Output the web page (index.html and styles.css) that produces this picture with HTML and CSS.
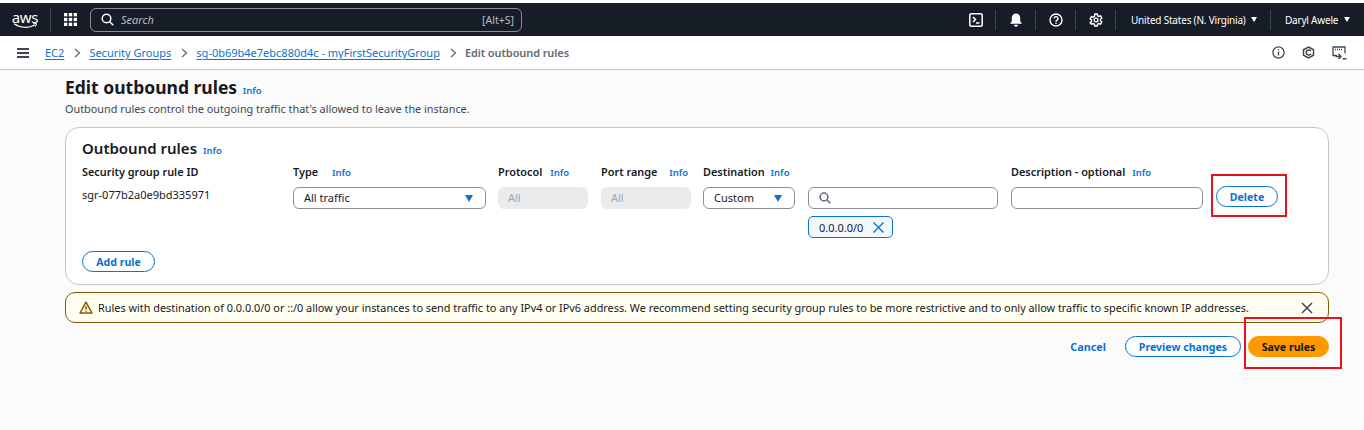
FILE: index.html
```html
<!DOCTYPE html>
<html>
<head>
	<meta charset="UTF-8">
	<title>Edit outbound rules</title>
	<link rel="stylesheet" href="styles.css">
</head>
<body>
	<header class="topbar">
		<div class="logo">
			<span class="logo-text">aws</span>
			<svg class="logo-smile" width="25" height="6" viewBox="0 0 25 6"><path d="M1 .8c6 4.300 15 4.500 21 1.200" fill="none" stroke="#fff" stroke-width="1.200"/><path d="M20 .8l3.500-.3-1 3.200" fill="none" stroke="#fff" stroke-width="1"/></svg>
		</div>
		<div class="top-sep"></div>
		<svg class="grid-icon" width="13" height="13" viewBox="0 0 14 14" fill="#fff">
			<rect x="0" y="0" width="3.600" height="3.600"/><rect x="5.200" y="0" width="3.600" height="3.600"/><rect x="10.400" y="0" width="3.600" height="3.600"/>
			<rect x="0" y="5.200" width="3.600" height="3.600"/><rect x="5.200" y="5.200" width="3.600" height="3.600"/><rect x="10.400" y="5.200" width="3.600" height="3.600"/>
			<rect x="0" y="10.400" width="3.600" height="3.600"/><rect x="5.200" y="10.400" width="3.600" height="3.600"/><rect x="10.400" y="10.400" width="3.600" height="3.600"/>
		</svg>
		<div class="searchbar">
			<svg width="13" height="13" viewBox="0 0 13 13" fill="none" stroke="#fff" stroke-width="1.500"><circle cx="5.500" cy="5.500" r="4.300"/><path d="M8.700 8.700l3.600 3.600"/></svg>
			<span class="search-text">Search</span>
			<span class="search-key">[Alt+S]</span>
		</div>
		<div class="top-right">
			<div class="top-btn">
				<svg width="14" height="14" viewBox="0 0 14 14" fill="none" stroke="#fff" stroke-width="1.500"><rect x=".8" y=".8" width="12.400" height="12.400" rx="1.500"/><path d="M4 4l2.500 2.500L4 9M7 10h3.500"/></svg>
			</div>
			<div class="top-btn">
				<svg width="14" height="14" viewBox="0 0 14 14" fill="#fff"><path d="M7 .5a4.200 4.200 0 0 0-4.200 4.200v3.500L1 10.700h12l-1.800-2.500V4.700A4.200 4.200 0 0 0 7 .5z"/><path d="M5 11.700h4a2 2 0 0 1-4 0z"/></svg>
			</div>
			<div class="top-btn">
				<svg width="14" height="14" viewBox="0 0 14 14" fill="none" stroke="#fff" stroke-width="1.400"><circle cx="7" cy="7" r="6"/><path d="M5.200 5.500a1.900 1.900 0 1 1 2.800 1.700c-.7.400-1 .7-1 1.500"/><path d="M7 9.700v1.300"/></svg>
			</div>
			<div class="top-btn">
				<svg width="14" height="14" viewBox="0 0 14 14" fill="none" stroke="#fff" stroke-width="1.400"><path d="M5.800 1h2.400l.4 1.700 1.300.7 1.700-.5 1.200 2.100-1.300 1.200v1.600l1.300 1.200-1.200 2.100-1.700-.5-1.300.7-.4 1.700H5.800l-.4-1.700-1.300-.7-1.700.5L1.200 9.800l1.300-1.200V7L1.200 5.800l1.200-2.100 1.700.5 1.300-.7z"/><circle cx="7" cy="7" r="1.900"/></svg>
			</div>
			<div class="top-menu region">United States (N. Virginia)<span class="caret"></span></div>
			<div class="top-menu user">Daryl Awele<span class="caret"></span></div>
		</div>
	</header>

	<nav class="crumbs">
		<svg class="menu-icon" width="12" height="10" viewBox="0 0 12 10" fill="#414750"><rect width="12" height="2"/><rect y="4" width="12" height="2"/><rect y="8" width="12" height="2"/></svg>
		<a class="crumb">EC2</a>
		<svg class="chev" width="7" height="10" viewBox="0 0 7 10"><path d="M1 1l4.500 4L1 9" fill="none" stroke="#5f6b7a" stroke-width="1.300"/></svg>
		<a class="crumb">Security Groups</a>
		<svg class="chev" width="7" height="10" viewBox="0 0 7 10"><path d="M1 1l4.500 4L1 9" fill="none" stroke="#5f6b7a" stroke-width="1.300"/></svg>
		<a class="crumb">sg-0b69b4e7ebc880d4c - myFirstSecurityGroup</a>
		<svg class="chev" width="7" height="10" viewBox="0 0 7 10"><path d="M1 1l4.500 4L1 9" fill="none" stroke="#5f6b7a" stroke-width="1.300"/></svg>
		<span class="crumb-now">Edit outbound rules</span>
		<div class="crumb-tools">
			<svg width="13" height="13" viewBox="0 0 13 13" fill="none" stroke="#414750" stroke-width="1.300"><circle cx="6.500" cy="6.500" r="5.600"/><path d="M6.500 5.500v4M6.500 3v1.300"/></svg>
			<svg width="13" height="13" viewBox="0 0 13 13" fill="none" stroke="#414750" stroke-width="1.500"><path d="M6.500 1l5 2.800v5.400l-5 2.800-5-2.800V3.800z"/><path d="M8.800 5.200a2.500 2.500 0 1 0 0 2.600"/></svg>
			<svg width="15" height="14" viewBox="0 0 15 14" fill="none" stroke="#414750" stroke-width="1.300"><path d="M5 9.500H1V1h12v6.500"/><path d="M3 3.500h8" stroke-width="1.500" stroke-dasharray="1 1"/><path d="M3.500 10.500h5M6.500 8l2.500 2.500L6.500 13M10.500 12.800h4" stroke-width="1.500"/></svg>
		</div>
	</nav>

	<main class="content">
		<h1 class="page-title">Edit outbound rules <a class="info">Info</a></h1>
		<p class="page-desc">Outbound rules control the outgoing traffic that's allowed to leave the instance.</p>

		<section class="panel">
			<h2 class="panel-title">Outbound rules <a class="info">Info</a></h2>
			<div class="rule-row">
				<div class="col col-id">
					<div class="label">Security group rule ID</div>
					<div class="rule-id">sgr-077b2a0e9bd335971</div>
				</div>
				<div class="col col-type">
					<div class="label">Type <a class="info">Info</a></div>
					<div class="select">All traffic<span class="select-arrow"></span></div>
				</div>
				<div class="col col-proto">
					<div class="label">Protocol <a class="info">Info</a></div>
					<div class="field-off">All</div>
				</div>
				<div class="col col-port">
					<div class="label">Port range <a class="info">Info</a></div>
					<div class="field-off">All</div>
				</div>
				<div class="col col-dest">
					<div class="label">Destination <a class="info">Info</a></div>
					<div class="select">Custom<span class="select-arrow"></span></div>
				</div>
				<div class="col col-cidr">
					<div class="label">&nbsp;</div>
					<div class="input">
						<svg width="12" height="12" viewBox="0 0 12 12" fill="none" stroke="#5f6b7a" stroke-width="1.500"><circle cx="5" cy="5" r="3.900"/><path d="M8 8l3.300 3.300"/></svg>
					</div>
					<div class="token">0.0.0.0/0
						<svg width="13" height="13" viewBox="0 0 13 13" fill="none" stroke="#0972d3" stroke-width="1.400"><path d="M1.500 1.500l10 10M11.500 1.500l-10 10"/></svg>
					</div>
				</div>
				<div class="col col-note">
					<div class="label">Description - optional <a class="info">Info</a></div>
					<div class="input"></div>
				</div>
				<div class="col col-del">
					<div class="label">&nbsp;</div>
					<button class="btn btn-del">Delete</button>
				</div>
			</div>
			<button class="btn btn-add">Add rule</button>
		</section>

		<div class="alert">
			<svg width="14" height="13" viewBox="0 0 14 13" fill="none" stroke="#855900" stroke-width="1.500"><path d="M7 1.200L1 12h12z" stroke-linejoin="round"/><path d="M7 5v3.500M7 9.500v1.200"/></svg>
			<span class="alert-text">Rules with destination of 0.0.0.0/0 or ::/0 allow your instances to send traffic to any IPv4 or IPv6 address. We recommend setting security group rules to be more restrictive and to only allow traffic to specific known IP addresses.</span>
			<svg class="alert-x" width="12" height="12" viewBox="0 0 12 12" fill="none" stroke="#414750" stroke-width="1.500"><path d="M1 1l10 10M11 1L1 11"/></svg>
		</div>

		<div class="actions">
			<a class="cancel">Cancel</a>
			<button class="btn btn-preview">Preview changes</button>
			<button class="btn btn-save">Save rules</button>
		</div>
	</main>

	<!-- red boxes drawn on the screenshot -->
	<div class="mark mark-delete"></div>
	<div class="mark mark-save"></div>
</body>
</html>
```

FILE: styles.css
```css
* { box-sizing: border-box; }

html, body {
	margin: 0;
	height: 430px;
	overflow: hidden;
}

body {
	position: relative;
	padding-top: 3px;
	background: #fbfbfb;
	color: #16191f;
	font-family: "Noto Sans", "Liberation Sans", sans-serif;
	font-size: 11px;
	box-shadow: inset 0 3px 0 #fff;
}

/* top bar */
.topbar {
	display: flex;
	align-items: center;
	height: 33px;
	padding-left: 12px;
	background: #161d26;
	color: #fff;
}

.logo {
	display: flex;
	flex-direction: column;
	align-items: center;
	width: 26px;
}

.logo-text {
	font-size: 15px;
	line-height: 12px;
	letter-spacing: -0.3px;
}

.top-sep {
	width: 1px;
	height: 24px;
	margin-left: 12px;
	background: #424650;
}

.grid-icon { margin-left: 13px; }

.searchbar {
	display: flex;
	align-items: center;
	width: 432px;
	height: 24px;
	margin-left: 13px;
	padding: 0 7px 0 10px;
	border: 1px solid #8c8c94;
	border-radius: 6px;
}

.search-text {
	margin-left: 7px;
	font-style: italic;
	color: #b6bec9;
}

.search-key {
	margin-left: auto;
	color: #b6bec9;
	font-size: 10.5px;
}

.top-right {
	display: flex;
	align-items: center;
	margin-left: auto;
	height: 100%;
}

.top-btn {
	display: flex;
	flex: none;
	align-items: center;
	justify-content: center;
	width: 40px;
	height: 20px;
	border-right: 1px solid #424650;
}

.top-menu {
	display: flex;
	flex: none;
	align-items: center;
	font-size: 10px;
	letter-spacing: -0.2px;
	white-space: nowrap;
}

.region {
	width: 155px;
	height: 20px;
	padding-left: 15px;
	border-right: 1px solid #424650;
}

.user {
	justify-content: space-between;
	width: 93px;
	padding: 0 14px;
}

.caret {
	width: 0;
	height: 0;
	margin-left: 5px;
	border-left: 3.5px solid transparent;
	border-right: 3.5px solid transparent;
	border-top: 5px solid #fff;
}

/* breadcrumbs */
.crumbs {
	display: flex;
	align-items: center;
	height: 34px;
	padding: 0 17px;
	background: #fff;
	border-bottom: 1px solid #c6c6cd;
}

.menu-icon { margin-right: 16px; }

.crumb {
	color: #0972d3;
	text-decoration: underline;
	text-underline-offset: 2px;
}

.chev { margin: 0 8px 0 10px; }

.crumb-now {
	color: #5f6b7a;
	font-weight: 600;
	letter-spacing: -0.1px;
}

.crumb-tools {
	display: flex;
	align-items: center;
	gap: 17px;
	margin-left: auto;
}

/* page */
.content { padding: 0 35px 0 65px; }

.page-title {
	margin: 6px 0 0;
	font-size: 17.5px;
	line-height: 22px;
	font-weight: 700;
}

.page-desc {
	margin: -1px 0 0;
	font-size: 10.85px;
	line-height: 16px;
	color: #414750;
}

.info {
	color: #0972d3;
	font-size: 9.5px;
	font-weight: 600;
}

.page-title .info { margin-left: 1px; }
.panel-title .info { margin-left: 2px; }

.panel {
	height: 158px;
	margin-top: 10px;
	padding: 10px 16px 0;
	background: #fff;
	border: 1px solid #c6c6cd;
	border-radius: 14px;
}

.panel-title {
	margin: 0;
	font-size: 15px;
	line-height: 20px;
	font-weight: 600;
}

.rule-row {
	display: flex;
	margin-top: 3px;
}

.label {
	height: 23px;
	font-size: 10.9px;
	line-height: 16px;
	font-weight: 600;
	white-space: nowrap;
}

.col { flex: none; }
.col-id { width: 211px; }
.col-type { width: 205px; }
.col-proto { width: 103px; }
.col-port { width: 102px; }
.col-dest { width: 105px; }
.col-cidr { width: 203px; }
.col-note { width: 205px; }

.col-type .info { margin-left: 11px; }
.col-proto .info { margin-left: 5px; }
.col-port .info { margin-left: 9px; }
.col-dest .info { margin-left: 3px; }
.col-note .info { margin-left: 4px; }

.rule-id { line-height: 16px; }

.select {
	position: relative;
	width: calc(100% - 12px);
	height: 22px;
	padding: 0 10px;
	line-height: 20px;
	background: #fff;
	border: 1px solid #8c8c94;
	border-radius: 6px;
}

.col-dest .select { width: 92px; }

.select-arrow {
	position: absolute;
	right: 12px;
	top: 7px;
	border-left: 4.5px solid transparent;
	border-right: 4.5px solid transparent;
	border-top: 7px solid #0972d3;
}

.field-off {
	width: 90px;
	height: 22px;
	padding: 0 10px;
	line-height: 22px;
	color: #9ba7b6;
	background: #e9ebed;
	border-radius: 6px;
}

.input {
	display: flex;
	align-items: center;
	width: calc(100% - 13px);
	height: 22px;
	padding: 0 10px;
	background: #fff;
	border: 1px solid #8c8c94;
	border-radius: 6px;
}

.token {
	display: inline-flex;
	align-items: center;
	gap: 9px;
	height: 22px;
	margin-top: 7px;
	padding: 0 7px 0 10px;
	background: #f2f8fd;
	border: 1px solid #0972d3;
	border-radius: 5px;
}

.btn {
	height: 21px;
	padding: 0;
	background: #fff;
	color: #0972d3;
	border: 1px solid #0972d3;
	border-radius: 11px;
	font-family: inherit;
	font-size: 10.6px;
	font-weight: 700;
}

.btn-del {
	display: block;
	width: 62px;
	margin-top: -1px;
}

.btn-add {
	display: block;
	width: 73px;
	margin-top: 13px;
}

.alert {
	display: flex;
	align-items: center;
	height: 31px;
	margin-top: 7px;
	padding: 0 15px 0 13px;
	background: #fffef0;
	border: 1px solid #855900;
	border-radius: 10px;
}

.alert-text {
	margin-left: 5px;
	font-size: 10.87px;
	white-space: nowrap;
}

.alert-x { margin-left: auto; }

.actions {
	display: flex;
	align-items: center;
	justify-content: flex-end;
	margin-top: 13px;
}

.cancel {
	margin-right: 19px;
	color: #0972d3;
	font-size: 10.8px;
	font-weight: 700;
}

.btn-preview { width: 116px; }

.btn-save {
	width: 81px;
	margin-left: 7px;
	background: #ff9900;
	border-color: #ff9900;
	color: #0f141a;
}

/* annotations on top of the page */
.mark {
	position: absolute;
	border: 2px solid #e8121d;
}

.mark-delete {
	left: 1211px;
	top: 174px;
	width: 76px;
	height: 43px;
}

.mark-save {
	left: 1244px;
	top: 317px;
	width: 98px;
	height: 52px;
}
```
